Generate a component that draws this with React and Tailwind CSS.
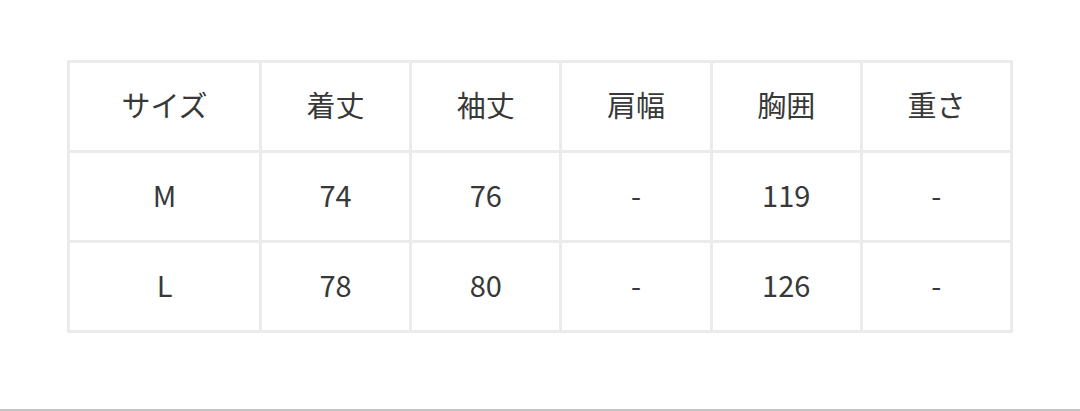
import React from "react";

const header = ["サイズ", "着丈", "袖丈", "肩幅", "胸囲", "重さ"];
const rows = [
    ["M", "74", "76", "-", "119", "-"],
    ["L", "78", "80", "-", "126", "-"],
];

export default function App() {
    const cells = [header, ...rows];

    return (
        <div
            className="h-[411px] w-[1080px] bg-white border-b-2 border-[#c4c4c4] flex flex-col items-center pt-[60px]"
            style={{ fontFamily: '"Noto Sans CJK JP", "Noto Sans", sans-serif' }}
        >
            <div className="w-[946px] grid grid-cols-[189px_repeat(5,1fr)] auto-rows-[87px] gap-[3px] p-[3px] bg-[#ebebeb]">
                {cells.map((row, i) =>
                    row.map((text, j) => (
                        <div key={i + "-" + j} className="bg-white flex items-center justify-center pb-[4px] text-[29px] text-[#383838]">
                            {text}
                        </div>
                    ))
                )}
            </div>
        </div>
    );
}
